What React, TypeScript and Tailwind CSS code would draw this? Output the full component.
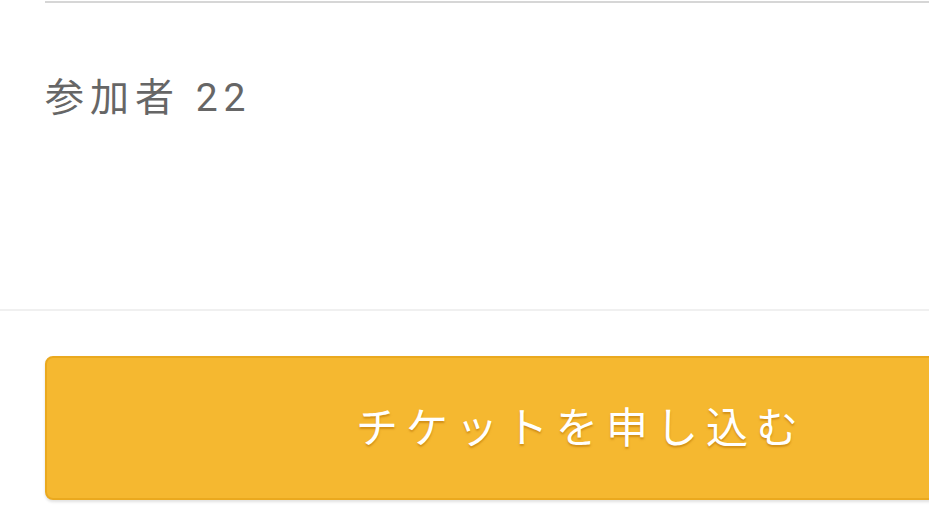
import React from 'react'

export default function App() {
  return (
    <div className="w-[929px] h-[509px] overflow-hidden bg-white" style={{ fontFamily: 'Roboto, "Noto Sans CJK JP", sans-serif' }}>
      <div className="pl-[45px] pt-px">
        <div className="h-[2px] bg-[#d6d6d6]" />
        <div className="h-[306px] pt-[71px]">
          <p className="text-[39px] leading-[48px] tracking-[6px] text-[#666666]">参加者 22</p>
        </div>
      </div>
      <div className="h-[2px] bg-[#f0f0f0]" />
      <div className="pt-[45px] pl-[45px]">
        <button className="flex h-[144px] w-[1064px] shrink-0 items-center justify-center rounded-[8px] border-2 border-[#eaa91f] bg-[#f5b830] pl-[8px] text-[42px] tracking-[8px] text-white shadow-[0_2px_3px_rgba(0,0,0,0.12)] [text-shadow:0_2px_2px_rgba(180,110,0,0.55)]">
          チケットを申し込む
        </button>
      </div>
    </div>
  )
}
